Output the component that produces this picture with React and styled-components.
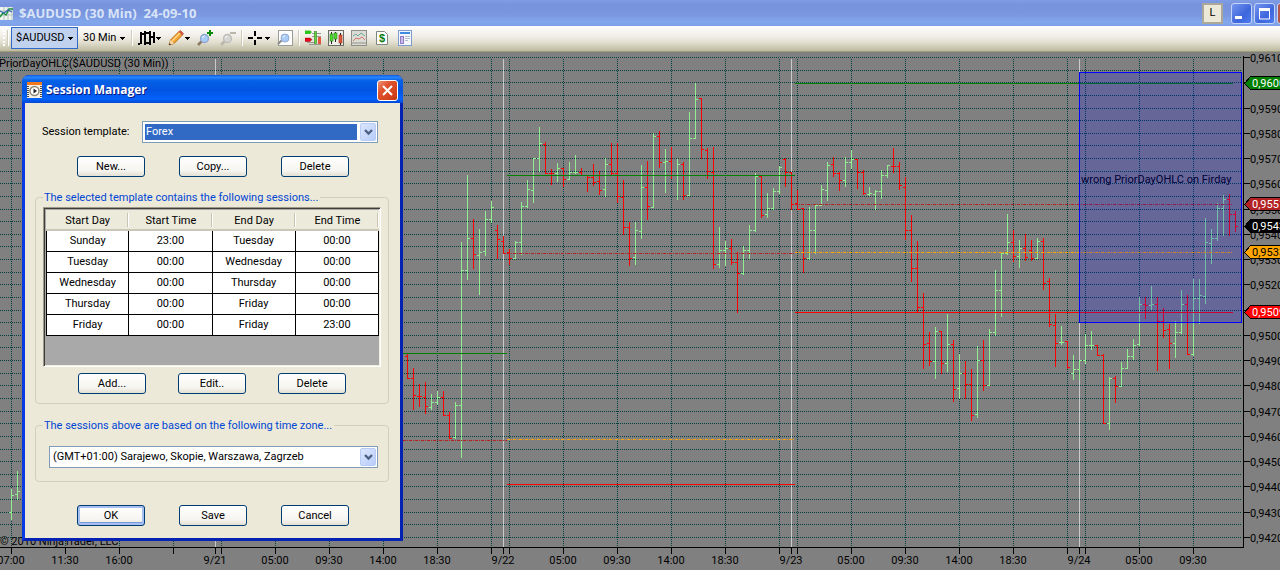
import React, { useState } from 'react';
import styled, { createGlobalStyle } from 'styled-components';

const sessions = [
  ['Sunday', '23:00', 'Tuesday', '00:00'],
  ['Tuesday', '00:00', 'Wednesday', '00:00'],
  ['Wednesday', '00:00', 'Thursday', '00:00'],
  ['Thursday', '00:00', 'Friday', '00:00'],
  ['Friday', '00:00', 'Friday', '23:00'],
];

// x, high, low, open, close, direction
const bars = [
  [11, 489, 520, 512, 495, 1],
  [17, 471, 500, 494, 491, 1],
  [407, 353, 379, 356, 378, 0],
  [413, 368, 410, 378, 395, 0],
  [419, 384, 407, 396, 396, 0],
  [425, 382, 414, 397, 406, 0],
  [431, 394, 410, 407, 402, 1],
  [437, 391, 405, 402, 397, 1],
  [443, 391, 416, 397, 415, 0],
  [449, 412, 439, 415, 438, 0],
  [455, 402, 439, 437, 405, 1],
  [461, 242, 458, 405, 270, 1],
  [467, 175, 280, 270, 238, 1],
  [473, 219, 269, 238, 254, 0],
  [479, 229, 295, 255, 252, 1],
  [485, 211, 256, 251, 219, 1],
  [491, 201, 223, 219, 207, 1],
  [497, 225, 259, 230, 239, 0],
  [503, 236, 254, 241, 253, 0],
  [509, 249, 265, 252, 258, 0],
  [515, 241, 259, 258, 242, 1],
  [521, 202, 255, 242, 206, 1],
  [527, 180, 208, 206, 189, 1],
  [533, 158, 203, 190, 158, 1],
  [539, 127, 172, 158, 143, 1],
  [545, 142, 174, 144, 173, 0],
  [551, 169, 185, 173, 173, 0],
  [557, 163, 182, 173, 168, 1],
  [563, 168, 187, 168, 179, 0],
  [569, 162, 180, 179, 172, 1],
  [575, 155, 174, 172, 172, 1],
  [581, 168, 176, 172, 175, 0],
  [587, 175, 192, 175, 177, 0],
  [593, 164, 186, 177, 182, 0],
  [599, 171, 195, 181, 190, 0],
  [605, 158, 197, 189, 164, 1],
  [611, 143, 175, 164, 173, 0],
  [617, 143, 203, 173, 196, 0],
  [623, 180, 235, 197, 227, 0],
  [629, 222, 266, 227, 258, 0],
  [635, 222, 265, 257, 230, 1],
  [641, 165, 239, 231, 187, 1],
  [647, 161, 220, 187, 206, 0],
  [653, 133, 208, 207, 136, 1],
  [659, 131, 168, 136, 162, 0],
  [665, 149, 193, 162, 161, 1],
  [671, 147, 179, 161, 175, 0],
  [677, 159, 200, 175, 164, 1],
  [683, 162, 200, 164, 195, 0],
  [689, 112, 196, 195, 138, 1],
  [695, 83, 139, 138, 99, 1],
  [701, 98, 159, 98, 149, 0],
  [707, 148, 179, 150, 171, 0],
  [713, 147, 269, 172, 264, 0],
  [719, 227, 268, 264, 250, 1],
  [725, 241, 266, 250, 248, 1],
  [731, 239, 265, 248, 262, 0],
  [737, 252, 313, 262, 273, 0],
  [743, 246, 275, 273, 250, 1],
  [749, 225, 259, 250, 230, 1],
  [755, 173, 232, 230, 176, 1],
  [761, 175, 218, 176, 215, 0],
  [767, 193, 218, 214, 208, 1],
  [773, 188, 210, 208, 191, 1],
  [779, 166, 194, 191, 167, 1],
  [785, 158, 187, 159, 172, 0],
  [791, 172, 210, 172, 204, 0],
  [797, 190, 210, 203, 209, 0],
  [803, 208, 273, 208, 258, 0],
  [809, 207, 260, 258, 230, 1],
  [815, 205, 254, 230, 205, 1],
  [821, 185, 206, 205, 189, 1],
  [827, 162, 201, 190, 165, 1],
  [833, 157, 177, 164, 173, 0],
  [839, 172, 191, 173, 180, 0],
  [845, 157, 187, 180, 162, 1],
  [851, 150, 169, 162, 159, 1],
  [857, 159, 189, 159, 172, 0],
  [863, 170, 195, 172, 193, 0],
  [869, 187, 196, 194, 193, 1],
  [875, 190, 210, 194, 191, 1],
  [881, 170, 199, 191, 175, 1],
  [887, 165, 178, 175, 165, 1],
  [893, 148, 173, 166, 166, 0],
  [899, 162, 190, 166, 185, 0],
  [905, 177, 240, 187, 230, 0],
  [911, 215, 282, 230, 268, 0],
  [917, 241, 312, 268, 307, 0],
  [923, 293, 369, 307, 344, 0],
  [929, 332, 366, 343, 361, 0],
  [935, 327, 379, 361, 331, 1],
  [941, 331, 374, 331, 363, 0],
  [947, 314, 372, 363, 344, 1],
  [953, 340, 402, 344, 389, 0],
  [959, 354, 399, 388, 373, 1],
  [965, 361, 399, 373, 384, 0],
  [971, 369, 421, 384, 415, 0],
  [977, 346, 418, 414, 360, 1],
  [983, 340, 391, 360, 385, 0],
  [989, 329, 386, 385, 332, 1],
  [995, 270, 336, 332, 290, 1],
  [1001, 253, 317, 290, 253, 1],
  [1007, 214, 255, 253, 242, 1],
  [1013, 230, 262, 242, 256, 0],
  [1019, 240, 268, 256, 248, 1],
  [1025, 234, 261, 248, 257, 0],
  [1031, 240, 261, 250, 258, 0],
  [1037, 238, 259, 258, 241, 1],
  [1043, 238, 290, 241, 283, 0],
  [1049, 278, 327, 281, 324, 0],
  [1055, 314, 367, 325, 343, 0],
  [1061, 326, 345, 342, 342, 1],
  [1067, 341, 369, 341, 367, 0],
  [1073, 355, 380, 373, 369, 1],
  [1079, 360, 380, 369, 360, 1],
  [1085, 334, 364, 360, 345, 1],
  [1091, 331, 350, 345, 345, 1],
  [1097, 345, 356, 345, 355, 0],
  [1103, 354, 424, 355, 423, 0],
  [1109, 377, 430, 423, 378, 1],
  [1115, 376, 403, 378, 386, 0],
  [1121, 362, 387, 386, 368, 1],
  [1127, 349, 369, 368, 356, 1],
  [1133, 339, 360, 356, 345, 1],
  [1139, 297, 346, 344, 304, 1],
  [1145, 297, 319, 304, 305, 0],
  [1151, 286, 310, 305, 304, 1],
  [1157, 297, 371, 304, 321, 0],
  [1163, 308, 338, 321, 330, 0],
  [1169, 324, 369, 329, 343, 0],
  [1175, 321, 358, 343, 332, 1],
  [1181, 290, 334, 332, 304, 1],
  [1187, 295, 355, 304, 354, 0],
  [1193, 279, 356, 354, 298, 1],
  [1199, 279, 324, 298, 295, 1],
  [1205, 218, 304, 296, 242, 1],
  [1211, 229, 264, 243, 238, 1],
  [1217, 203, 241, 238, 208, 1],
  [1223, 195, 236, 208, 199, 1],
  [1229, 194, 236, 199, 214, 0],
  [1235, 211, 232, 214, 226, 0],
];

const barPath = up =>
  bars
    .filter(b => b[5] === up)
    .map(
      ([x, high, low, open, close]) =>
        `M${x} ${high}h1V${low}h-1zM${x - 2} ${open}h2v1h-2zM${x + 1} ${close}h2v1h-2z`
    )
    .join('');

const timeTicks = [
  [11, '07:00'],
  [65, '11:30'],
  [119, '16:00'],
  [173, ''],
  [221, ''],
  [275, '05:00'],
  [329, '09:30'],
  [383, '14:00'],
  [437, '18:30'],
  [491, ''],
  [509, ''],
  [563, '05:00'],
  [617, '09:30'],
  [671, '14:00'],
  [725, '18:30'],
  [779, ''],
  [797, ''],
  [851, '05:00'],
  [905, '09:30'],
  [959, '14:00'],
  [1013, '18:30'],
  [1067, ''],
  [1085, ''],
  [1139, '05:00'],
  [1193, '09:30'],
];

const dayBreaks = [
  [215, '9/21'],
  [503, '9/22'],
  [791, '9/23'],
  [1079, '9/24'],
];

const levels = [
  { x1: 403, x2: 507, y: 353, color: '#008000' },
  { x1: 403, x2: 507, y: 440, color: '#b22222', dash: true },
  { x1: 507, x2: 795, y: 175, color: '#008000' },
  { x1: 507, x2: 795, y: 253, color: '#b22222', dash: true },
  { x1: 507, x2: 795, y: 439, color: '#ffa500', dash: true },
  { x1: 507, x2: 795, y: 484, color: '#ff0000' },
  { x1: 795, x2: 1233, y: 83, color: '#008000' },
  { x1: 795, x2: 1233, y: 204, color: '#b22222', dash: true },
  { x1: 795, x2: 1233, y: 252, color: '#ffa500', dash: true },
  { x1: 795, x2: 1233, y: 312, color: '#ff0000' },
];

const priceTags = [
  { y: 83, text: '0,9600', fill: '#008000', color: '#fff' },
  { y: 204, text: '0,9551', fill: '#b22222', color: '#fff' },
  { y: 226, text: '0,9543', fill: '#000', color: '#fff' },
  { y: 252, text: '0,9533', fill: '#ffa500', color: '#000' },
  { y: 312, text: '0,9509', fill: '#ff0000', color: '#fff' },
];

const gridRows = Array.from({ length: 39 }, (_, i) => Math.round(57 + i * 12.63));

const Chart = () => (
  <ChartSvg viewBox="0 52 1280 518" role="img" aria-label="$AUDUSD 30 minute chart">
    <rect y="52" width="1280" height="518" fill="#808080" />

    <g stroke="#004040" strokeDasharray="1 1">
      {gridRows.map(y => (
        <line key={y} x1="0" x2="1242" y1={y + 0.5} y2={y + 0.5} />
      ))}
      {timeTicks.map(([x]) => (
        <line key={x} x1={x + 0.5} x2={x + 0.5} y1="59" y2="547" />
      ))}
    </g>

    {dayBreaks.map(([x]) => (
      <rect key={x} x={x} y="59" width="1" height="488" fill="#c8c8c8" />
    ))}

    <path d={barPath(1)} fill="#90ee90" />
    <path d={barPath(0)} fill="#ff0000" />

    {levels.map(l => (
      <line
        key={`${l.x1}-${l.y}`}
        x1={l.x1}
        x2={l.x2}
        y1={l.y + 0.5}
        y2={l.y + 0.5}
        stroke={l.color}
        strokeDasharray={l.dash ? '3 1 1 1' : undefined}
      />
    ))}

    <ChartText x="-1" y="67">PriorDayOHLC($AUDUSD (30 Min))</ChartText>
    <ChartText x="0" y="545">© 2010 NinjaTrader, LLC</ChartText>
    <ChartText x="1081" y="183">wrong PriorDayOHLC on Firday</ChartText>

    <rect x="1079.5" y="72.5" width="162" height="250" fill="#0000ff" fillOpacity="0.2" />
    <rect x="1079.5" y="72.5" width="162" height="250" fill="none" stroke="#0000ff" />

    <path d="M1243.5 56V547.5H0" fill="none" stroke="#000" />
    {gridRows
      .filter((_, i) => i % 2 === 0)
      .map((y, i) => (
        <g key={y}>
          <rect x="1244" y={y} width="6" height="1" />
          <ChartText x="1250" y={y + 5}>{`0,${9610 - i * 10}`}</ChartText>
        </g>
      ))}
    {[...timeTicks, ...dayBreaks].map(([x, label]) => (
      <g key={x}>
        <rect x={x} y="548" width="1" height="6" />
        <ChartText x={x} y="564" textAnchor="middle">
          {label}
        </ChartText>
      </g>
    ))}
    {priceTags.map(t => (
      <g key={t.text}>
        <path
          d={`M1244.5 ${t.y + 0.5}l6 -7h40v13h-40z`}
          fill={t.fill}
          stroke="#000"
        />
        <ChartText x="1252" y={t.y + 4} fill={t.color}>
          {t.text}
        </ChartText>
      </g>
    ))}
  </ChartSvg>
);

const Caret = () => (
  <svg width="5" height="3" viewBox="0 0 5 3" shapeRendering="crispEdges">
    <path d="M0 0h5v1h-1v1h-1v1h-1v-1h-1v-1h-1z" />
  </svg>
);

const Chevron = () => (
  <svg width="9" height="7" viewBox="0 0 9 7">
    <path d="M1 1l3.5 3.5L8 1" fill="none" stroke="#4d6185" strokeWidth="2.4" />
  </svg>
);

const Icon = ({ children }) => (
  <svg width="16" height="16" viewBox="0 0 16 16">
    {children}
  </svg>
);

// open-high-low-close bars
const BarsIcon = () => (
  <svg width="17" height="16" viewBox="0 0 17 16" shapeRendering="crispEdges">
    <path d="M2 2h2v12H2zM0 13h2v2H0zM4 3h2v2H4zM6 1h2v14H6zM8 2h3v2H8zM11 1h2v14h-2zM8 12h3v2H8zM15 2h2v11h-2zM13 6h2v2h-2z" />
  </svg>
);

const PencilIcon = () => (
  <Icon>
    <path d="M1 15l1.500-5L11 1.500l3.500 3.500L6 13.500z" fill="#f6a531" stroke="#b96d18" />
    <path d="M4 11L12 3" stroke="#ffd98c" strokeWidth="1.500" />
    <path d="M11 1.500l1.500-1 3 3-1 1.500z" fill="#e4574b" stroke="#a8452f" strokeWidth=".6" />
    <path d="M1 15l1.500-5L6 13.500z" fill="#f3dcb4" />
    <path d="M1 15l.6-2 1.500 1.400z" fill="#222" />
  </Icon>
);

const LensIcon = ({ sign }) => (
  <Icon>
    <path d="M1 15l4-4" stroke={sign === '-' ? '#b9b6aa' : '#8a7a62'} strokeWidth="2.500" />
    <circle
      cx="7.500"
      cy="8.500"
      r="4"
      fill={sign === '-' ? '#d5d5d2' : '#a9cbf7'}
      stroke={sign === '-' ? '#bdbdb8' : '#8fa5cf'}
      strokeWidth="1.300"
    />
    <path d="M5.500 8a2.500 2.500 0 0 1 2-2" stroke="#fff" fill="none" />
    {sign === '+' && (
      <path d="M10 3h6M13 0v6" stroke="#0a8a0a" strokeWidth="2" shapeRendering="crispEdges" />
    )}
    {sign === '-' && <path d="M10 3h6" stroke="#b9b6aa" strokeWidth="2" />}
  </Icon>
);

const CrosshairIcon = () => (
  <Icon>
    <path
      d="M7 1v5M7 10v5M0 8h5M9 8h5"
      stroke="#000"
      strokeWidth="2"
      shapeRendering="crispEdges"
    />
  </Icon>
);

const ZoomWindowIcon = () => (
  <Icon>
    <rect x="1.500" y=".5" width="14" height="15" fill="#fff" stroke="#9b9b97" />
    <path d="M1 14l4-4" stroke="#8a8a88" strokeWidth="2" />
    <circle cx="8" cy="8" r="4" fill="#a9cbf7" stroke="#93a8d0" />
    <path d="M6 7.500a2 2 0 0 1 2-1.500" stroke="#fff" fill="none" />
  </Icon>
);

const OrdersIcon = () => (
  <Icon>
    <path d="M7 3.500h9M7 6.500h9M2 12.500h8M4 14.500h12" stroke="#9a9a94" />
    <path d="M0 .5h5L7 2 5 4H0z" fill="#2fc41f" />
    <path d="M0 8h5l2 1.500L5 11.500H0z" fill="#e8001c" stroke="#8c0000" strokeWidth=".4" />
    <rect x="9.500" y="1.500" width="2" height="12" fill="#5fdc3a" stroke="#3b7d2c" strokeWidth=".6" />
    <rect x="13" y="7" width="3" height="7" fill="#e2583c" />
  </Icon>
);

const CandlesIcon = () => (
  <Icon>
    <rect x=".5" y=".5" width="15" height="15" fill="#efeee8" stroke="#6c6c66" />
    <path d="M3.500 2v12M7.500 2v10M12.500 3v12" stroke="#222" />
    <rect x="2" y="4" width="3" height="7" fill="#4fdc2e" stroke="#2b7d1c" strokeWidth=".6" />
    <rect x="6" y="3" width="3" height="6" fill="#4fdc2e" stroke="#2b7d1c" strokeWidth=".6" />
    <rect x="11" y="5" width="3" height="8" fill="#e2583c" stroke="#93301b" strokeWidth=".6" />
  </Icon>
);

const IndicatorIcon = () => (
  <Icon>
    <rect x=".5" y=".5" width="15" height="15" fill="#dcdcd6" stroke="#8f8f89" />
    <path d="M2 6l3-2 2 2 3-3 4 3" fill="none" stroke="#6fa99b" />
    <path d="M2 11l3-3 3 1 3-2 3 3" fill="none" stroke="#d87468" />
    <path d="M1 13h14" stroke="#b7b7b0" strokeWidth="2" />
  </Icon>
);

const StrategyIcon = () => (
  <Icon>
    <path d="M2.500 1.500h8l3 3v10h-11z" fill="#fff" stroke="#7f8780" />
    <text x="8" y="12" fontFamily="Liberation Sans, sans-serif" fontWeight="bold" fontSize="11" textAnchor="middle" fill="#0a7a0a">
      $
    </text>
  </Icon>
);

const PropertiesIcon = () => (
  <Icon>
    <rect x="1.500" y=".5" width="13" height="15" fill="#f3f6fc" stroke="#7c9cd0" />
    <rect x="3" y="2" width="10" height="2" fill="#3f8ae0" />
    <rect x="3.500" y="6.500" width="3" height="7" fill="#c9bce8" stroke="#8f7cc4" />
    <path d="M8 6.500h5M8 8.500h5M8 10.500h3" stroke="#b4bccb" />
  </Icon>
);

const ChartWindowIcon = () => (
  <svg width="13" height="15" viewBox="0 0 13 15">
    <rect width="13" height="13" y="1" fill="#eef3ee" />
    <path d="M0 5h13M0 9h13M4 1v13M8 1v13M12 1v13" stroke="#b5c3c0" />
    <path d="M0 11l3-4 3 2 3-6 4 0" fill="none" stroke="#1c8f3c" strokeWidth="1.500" />
    <path d="M0 5l4 2 4-3 4 2" fill="none" stroke="#3769b5" strokeWidth="1.200" />
  </svg>
);

const ClockIcon = () => (
  <svg width="15" height="16" viewBox="0 0 15 16">
    <rect width="15" height="16" fill="#f4f0e6" />
    <rect width="15" height="3" fill="#f0791e" />
    <path d="M1 4v11M14 4v11" stroke="#4d4a44" strokeWidth="2" strokeDasharray="1 1" />
    <circle cx="7.500" cy="9" r="4.500" fill="#fff" stroke="#8d8878" strokeWidth="1.500" />
    <path d="M6.500 6.500v5l3.500-2.500z" fill="#222" />
  </svg>
);

const Combo = ({ id, label, options, highlighted }) => (
  <ComboFrame>
    <ComboSelect id={id} aria-label={label} $highlighted={highlighted}>
      {options.map(o => (
        <option key={o}>{o}</option>
      ))}
    </ComboSelect>
    <ComboArrow aria-hidden="true">
      <Chevron />
    </ComboArrow>
  </ComboFrame>
);

const SessionManager = () => (
  <Dialog role="dialog" aria-labelledby="dialog-title">
    <DialogBar>
      <ClockIcon />
      <DialogTitle id="dialog-title">Session Manager</DialogTitle>
      <CloseButton aria-label="Close">
        <svg width="13" height="13" viewBox="0 0 13 13">
          <path d="M2 2l9 9M11 2l-9 9" stroke="#fff" strokeWidth="2" />
        </svg>
      </CloseButton>
    </DialogBar>
    <DialogBody>
      <TemplateRow>
        <label htmlFor="template">Session template:</label>
        <Combo id="template" options={['Forex']} highlighted />
      </TemplateRow>
      <ButtonRow>
        <Button>New...</Button>
        <Button>Copy...</Button>
        <Button>Delete</Button>
      </ButtonRow>

      <Group>
        <Legend>The selected template contains the following sessions...</Legend>
        <GridFrame>
          <SessionTable>
            <thead>
              <tr>
                <HeadCell>Start Day</HeadCell>
                <HeadCell>Start Time</HeadCell>
                <HeadCell>End Day</HeadCell>
                <HeadCell>End Time</HeadCell>
              </tr>
            </thead>
            <tbody>
              {sessions.map(row => (
                <tr key={row[0]}>
                  {row.map((cell, i) => (
                    <Cell key={i}>{cell}</Cell>
                  ))}
                </tr>
              ))}
            </tbody>
          </SessionTable>
        </GridFrame>
        <GroupButtons>
          <Button>Add...</Button>
          <Button>Edit..</Button>
          <Button>Delete</Button>
        </GroupButtons>
      </Group>

      <Group>
        <Legend>The sessions above are based on the following time zone...</Legend>
        <ZoneRow>
          <Combo
            label="Time zone"
            options={['(GMT+01:00) Sarajewo, Skopie, Warszawa, Zagrzeb']}
          />
        </ZoneRow>
      </Group>

      <FooterRow>
        <Button $primary>OK</Button>
        <Button>Save</Button>
        <Button>Cancel</Button>
      </FooterRow>
    </DialogBody>
  </Dialog>
);

const App = () => {
  const [symbol, setSymbol] = useState('$AUDUSD');

  return (
    <Window>
      <GlobalStyle />
      <TitleBar>
        <ChartWindowIcon />
        <WindowTitle>{`${symbol} (30 Min)  24-09-10`}</WindowTitle>
        <LinkButton>L</LinkButton>
        <WindowButtons>
          <WindowButton aria-label="Minimize">
            <svg width="13" height="13" viewBox="0 0 13 13">
              <rect x="0" y="9" width="7" height="3" fill="#fff" />
            </svg>
          </WindowButton>
          <WindowButton aria-label="Maximize">
            <svg width="13" height="13" viewBox="0 0 13 13">
              <path d="M1.500 3v9h10V3z" fill="none" stroke="#fff" />
              <rect x="1" y="1" width="11" height="3" fill="#fff" />
            </svg>
          </WindowButton>
          <WindowButton aria-label="Close window" $danger />
        </WindowButtons>
      </TitleBar>

      <Toolbar>
        <Grip />
        <Separator />
        <SymbolPicker>
          <ToolSelect
            aria-label="Instrument"
            value={symbol}
            onChange={e => setSymbol(e.target.value)}
          >
            <option>$AUDUSD</option>
          </ToolSelect>
          <Caret />
        </SymbolPicker>
        <IntervalPicker>
          <ToolSelect aria-label="Interval">
            <option>30 Min</option>
          </ToolSelect>
          <Caret />
        </IntervalPicker>
        <Separator />
        <ToolButton aria-label="Chart style"><BarsIcon /><Caret /></ToolButton>
        <ToolButton aria-label="Draw"><PencilIcon /><Caret /></ToolButton>
        <ToolButton aria-label="Zoom in"><LensIcon sign="+" /></ToolButton>
        <ToolButton aria-label="Zoom out"><LensIcon sign="-" /></ToolButton>
        <Separator />
        <ToolButton aria-label="Cursor"><CrosshairIcon /><Caret /></ToolButton>
        <ToolButton aria-label="Data box"><ZoomWindowIcon /></ToolButton>
        <Separator />
        <ToolButton aria-label="Chart trader"><OrdersIcon /></ToolButton>
        <ToolButton aria-label="Data series"><CandlesIcon /></ToolButton>
        <ToolButton aria-label="Indicators"><IndicatorIcon /></ToolButton>
        <ToolButton aria-label="Strategies"><StrategyIcon /></ToolButton>
        <ToolButton aria-label="Properties"><PropertiesIcon /></ToolButton>
      </Toolbar>

      <Chart />
      <SessionManager />
    </Window>
  );
};

const GlobalStyle = createGlobalStyle`
  * {
    box-sizing: border-box;
  }

  body {
    margin: 0;
    background: #808080;
    overflow: hidden;
    font-family: Roboto, 'Liberation Sans', sans-serif;
    font-size: 11px;
    line-height: 14px;
    color: #000;
  }

  button,
  select {
    font: inherit;
    color: inherit;
  }
`;

const Window = styled.div`
  position: relative;
  min-height: 100vh;
`;

const TitleBar = styled.header`
  display: flex;
  align-items: center;
  height: 26px;
  overflow: hidden;
  background: linear-gradient(#7f9ce4, #7893dd 20%, #7a96df 55%, #82a7ec 85%, #7e9fe6);
`;

const WindowTitle = styled.h1`
  flex: 1;
  margin: 0;
  padding-left: 6px;
  font-family: 'Open Sans', 'Liberation Sans', sans-serif;
  font-size: 13px;
  font-weight: 700;
  white-space: pre;
  color: #d8e4f8;
`;

const LinkButton = styled.button`
  width: 21px;
  height: 21px;
  padding: 0;
  border: 2px solid #aca899;
  background: #ece9d8;
`;

const WindowButtons = styled.div`
  display: flex;
  gap: 2px;
  margin-left: 8px;
  margin-right: -18px;
`;

const WindowButton = styled.button`
  display: flex;
  align-items: center;
  justify-content: center;
  width: 21px;
  height: 21px;
  padding: 0;
  border: 1px solid #c3d3fa;
  border-radius: 3px;
  background: ${props =>
    props.$danger ? '#b5564a' : 'linear-gradient(135deg, #7595ee, #3d66dc 60%, #4f7df0)'};
`;

const Toolbar = styled.div`
  display: flex;
  align-items: center;
  gap: 1px;
  height: 26px;
  padding-bottom: 1px;
  border-bottom: 1px solid #9d9c78;
  background: linear-gradient(#fefefd, #f1eee8 40%, #e2dfd0 65%, #bdbaa0);
`;

const Grip = styled.div`
  width: 5px;
  height: 16px;
  border-right: 2px dotted #fff;
`;

const Separator = styled.div`
  width: 1px;
  height: 16px;
  margin: 0 1px 0 2px;
  background: #fff;
  box-shadow: -1px 0 0 #cfccba;
`;

const Picker = styled.div`
  display: flex;
  align-items: center;
  justify-content: space-between;
  height: 22px;
`;

const SymbolPicker = styled(Picker)`
  width: 67px;
  padding: 0 4px;
  border: 1px solid #316ac5;
  background: #c1d2ee;
`;

const IntervalPicker = styled(Picker)`
  width: 50px;
  padding: 0 4px;
`;

const ToolSelect = styled.select`
  flex: 1;
  min-width: 0;
  padding: 0;
  border: none;
  background: none;
  appearance: none;
  outline: none;
`;

const ToolButton = styled.button`
  display: flex;
  align-items: center;
  gap: 1px;
  height: 22px;
  padding: 0 3px;
  border: none;
  background: none;
`;

const ChartSvg = styled.svg`
  display: block;
  width: 100%;
  shape-rendering: crispEdges;
`;

const ChartText = styled.text`
  font-size: 11px;
`;

const Dialog = styled.section`
  position: absolute;
  left: 22px;
  top: 75px;
  width: 381px;
  border: 3px solid #0a3be0;
  border-top: none;
  border-right-color: #0322b4;
  border-bottom-color: #0322b4;
  border-radius: 7px 7px 0 0;
  background: #0a3be0;
`;

const DialogBar = styled.div`
  display: flex;
  align-items: center;
  gap: 4px;
  height: 28px;
  margin: 0 -3px;
  padding: 2px 5px 0 5px;
  border-radius: 7px 7px 0 0;
  background: linear-gradient(#0a5be6, #2b86fb 8%, #0561e6 20%, #0254e0 55%, #0262fb 85%, #0348d6);
`;

const DialogTitle = styled.h2`
  flex: 1;
  margin: 0;
  font-family: 'Open Sans', 'Liberation Sans', sans-serif;
  font-size: 12px;
  font-weight: 700;
  color: #fff;
  text-shadow: 1px 1px #0a1883;
`;

const CloseButton = styled.button`
  display: flex;
  align-items: center;
  justify-content: center;
  width: 21px;
  height: 21px;
  padding: 0;
  border: 1px solid #fff;
  border-radius: 3px;
  background: linear-gradient(135deg, #ee9479, #e0532f 35%, #d2401a 80%, #b93610);
`;

const DialogBody = styled.div`
  padding: 18px 11px 12px 10px;
  background: #ece9d8;
`;

const TemplateRow = styled.div`
  display: grid;
  grid-template-columns: 100px 1fr;
  align-items: center;
  padding: 0 11px 0 7px;
`;

const ButtonRow = styled.div`
  display: flex;
  gap: 34px;
  padding: 13px 0 13px 42px;
`;

const FooterRow = styled(ButtonRow)`
  padding-top: 9px;
  padding-bottom: 0;
`;

const GroupButtons = styled(ButtonRow)`
  gap: 32px;
  padding: 6px 0 0 35px;
`;

const Button = styled.button`
  width: 68px;
  height: 21px;
  padding: 0;
  border: 1px solid #003c74;
  border-radius: 3px;
  background: linear-gradient(#fff, #f6f5f0 70%, #e3e0d4);
  box-shadow: ${props =>
    props.$primary ? 'inset 0 0 0 2px #a5bff0, inset 0 -1px 0 2px #7c98dc' : 'none'};
`;

const Group = styled.fieldset`
  min-width: 0;
  margin: 0 0 14px;
  padding: 2px 7px 9px 7px;
  border: 1px solid #d0d0bf;
  border-radius: 4px;
`;

const Legend = styled.legend`
  padding: 1px 2px 0 1px;
  color: #0046d5;
`;

const ZoneRow = styled.div`
  padding: 11px 3px 4px 6px;
`;

const ComboFrame = styled.div`
  display: flex;
  height: 22px;
  padding: 1px;
  border: 1px solid #7f9db9;
  background: #fff;
`;

const ComboSelect = styled.select`
  flex: 1;
  min-width: 0;
  margin: 1px 3px 1px 1px;
  padding: 0 1px;
  border: none;
  border-radius: 0;
  outline: none;
  appearance: none;
  background: ${props => (props.$highlighted ? '#316ac5' : '#fff')};
  color: ${props => (props.$highlighted ? '#fff' : '#000')};
`;

const ComboArrow = styled.span`
  display: flex;
  align-items: center;
  justify-content: center;
  width: 16px;
  border: 1px solid #b8cbf6;
  border-radius: 2px;
  background: linear-gradient(135deg, #dbe6fd, #b9cdf9);
`;

const GridFrame = styled.div`
  height: 160px;
  padding: 2px 1px 1px 2px;
  border: 1px solid;
  border-color: #9d9a8c #fff #fff #9d9a8c;
  background: #a9a9a9;
  box-shadow: inset 1px 1px #3f3d35, inset -1px -1px #f1efe2;
`;

const SessionTable = styled.table`
  width: 100%;
  table-layout: fixed;
  border-collapse: separate;
  border-spacing: 0;
  text-align: center;
`;

const HeadCell = styled.th`
  height: 21px;
  padding: 2px 0 0;
  font-weight: 400;
  border-bottom: 2px solid #cbc7b8;
  background:
    linear-gradient(#c7c5b2, #c7c5b2) right 1px center / 1px 14px no-repeat,
    linear-gradient(#fff, #fff) right center / 1px 14px no-repeat,
    #ebeadb;
`;

const Cell = styled.td`
  height: 21px;
  padding: 0;
  border-right: 1px solid #000;
  border-bottom: 1px solid #000;
  background: #fff;

  &:first-child {
    border-left: 1px solid #000;
  }
`;

export default App;
